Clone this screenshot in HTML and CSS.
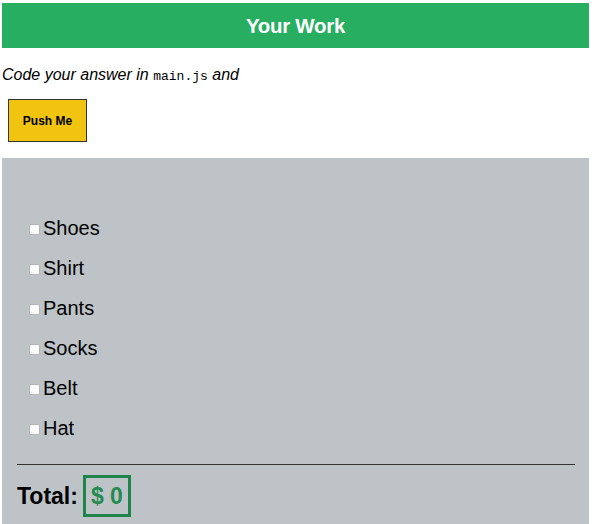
FILE: index.html
```html
<!DOCTYPE html>
<html>
<head>
<meta charset="utf-8">
<link rel="stylesheet" href="styles.css">
</head>
<body>
<div class="page">
  <header class="title">Your Work</header>
  <p class="intro">Code your answer in <code>main.js</code> and</p>
  <div class="actions"><button class="push">Push Me</button></div>
  <section class="panel">
    <ul class="items">
      <li><label><input type="checkbox"><span>Shoes</span></label></li>
      <li><label><input type="checkbox"><span>Shirt</span></label></li>
      <li><label><input type="checkbox"><span>Pants</span></label></li>
      <li><label><input type="checkbox"><span>Socks</span></label></li>
      <li><label><input type="checkbox"><span>Belt</span></label></li>
      <li><label><input type="checkbox"><span>Hat</span></label></li>
    </ul>
    <hr class="rule">
    <div class="total"><span class="total-label">Total:</span><span class="total-box">$ 0</span></div>
  </section>
</div>
</body>
</html>
```

FILE: styles.css
```css
html, body {
  margin: 0;
  padding: 0;
  background: #ffffff;
}
body {
  font-family: "Liberation Sans", Arial, sans-serif;
  color: #000;
}
.page {
  padding: 3px 3px 0 2px;
}
.title {
  background: #27ae60;
  color: #ffffff;
  height: 45px;
  line-height: 45px;
  text-align: center;
  font-weight: bold;
  font-size: 20.5px;
  letter-spacing: -0.3px;
}
.intro {
  margin: 18px 0 0 0;
  font-style: italic;
  font-size: 16px;
  line-height: 18px;
}
.intro code {
  font-family: "Liberation Mono", "Courier New", monospace;
  font-style: normal;
  font-size: 13px;
}
.actions {
  padding: 13px 0 16px 6px;
}
.push {
  display: block;
  width: 79px;
  height: 43px;
  background: #f1c40f;
  border: 1px solid #333333;
  border-radius: 0;
  font-family: "Liberation Sans", Arial, sans-serif;
  font-weight: bold;
  font-size: 12px;
  color: #000;
  padding: 0;
  margin: 0;
}
.panel {
  background: #bdc3c7;
  padding: 50px 14px 10px 15px;
  min-height: 320px;
}
.items {
  list-style: none;
  margin: 0;
  padding: 0 0 0 12px;
}
.items li {
  height: 40px;
  display: flex;
  align-items: center;
}
.items label {
  display: flex;
  align-items: center;
  font-size: 20px;
  line-height: 24px;
}
.items input {
  -webkit-appearance: none;
  appearance: none;
  width: 11px;
  height: 11px;
  margin: 3px 3px 0 0;
  background: #ffffff;
  border: 1px solid #b5b5b5;
  border-radius: 2px;
  box-sizing: border-box;
}
.rule {
  margin: 16px 0 0 0;
  border: none;
  border-top: 1px solid #333333;
  height: 0;
}
.total {
  margin-top: 10px;
  display: flex;
  align-items: center;
  font-weight: bold;
  font-size: 23px;
}
.total-label {
  margin-right: 5px;
}
.total-box {
  border: 3px solid #1e8449;
  color: #248a50;
  padding: 5px 5px;
  line-height: 26px;
}
```
